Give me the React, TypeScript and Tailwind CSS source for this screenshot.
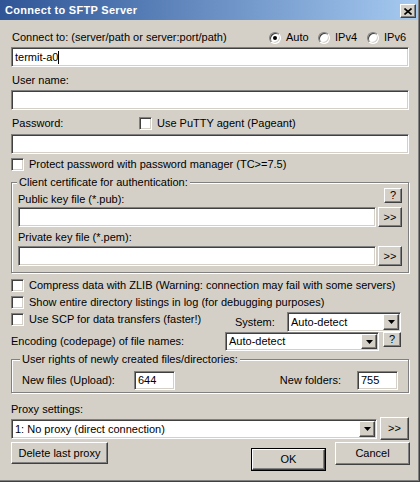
import React from "react";

const sunken =
  "border border-t-[#808080] border-l-[#808080] border-b-white border-r-white bg-white shadow-[inset_1px_1px_0_#404040,inset_-1px_-1px_0_#d4d0c8]";
const raised =
  "border border-t-white border-l-white border-b-[#404040] border-r-[#404040] bg-[#d4d0c8] shadow-[inset_-1px_-1px_0_#808080]";
const etched = "relative border border-[#808080] shadow-[inset_1px_1px_0_#fff,1px_1px_0_#fff]";

const Checkbox = ({ label, className = "" }: { label: string; className?: string }) => (
  <div className={`flex items-center h-[13px] ${className}`}>
    <span className={`w-[13px] h-[13px] shrink-0 ${sunken}`} />
    <span className="ml-[5px] whitespace-nowrap">{label}</span>
  </div>
);

const Radio = ({ label, checked }: { label: string; checked?: boolean }) => (
  <div className="flex items-center w-[49px] h-[13px]">
    <span className="relative w-[12px] h-[12px] shrink-0 rounded-full bg-white border border-t-[#808080] border-l-[#808080] border-b-white border-r-white shadow-[inset_1px_1px_0_#404040,inset_-1px_-1px_0_#d4d0c8] flex items-center justify-center">
      {checked && <span className="w-[4px] h-[4px] rounded-full bg-black" />}
    </span>
    <span className="ml-[5px]">{label}</span>
  </div>
);

const Button = ({ children, className = "" }: { children: React.ReactNode; className?: string }) => (
  <div className={`flex items-center justify-center ${raised} ${className}`}>{children}</div>
);

const Arrow = () => (
  <svg width="7" height="4" viewBox="0 0 7 4">
    <path d="M0 0h7L3.5 4z" fill="#000" />
  </svg>
);

const Combo = ({ value, className = "" }: { value: string; className?: string }) => (
  <div className={`flex items-stretch p-[1px] ${sunken} ${className}`}>
    <span className="flex-1 flex items-center pl-[2px] whitespace-nowrap">{value}</span>
    <Button className="w-[16px]">
      <Arrow />
    </Button>
  </div>
);

const Edit = ({ value, className = "", caret }: { value?: string; className?: string; caret?: boolean }) => (
  <div className={`flex items-center pl-[3px] ${sunken} ${className}`}>
    {value && <span>{value}</span>}
    {caret && <span className="w-px h-[13px] bg-black" />}
  </div>
);

export default function App() {
  return (
    <div
      className="w-[420px] h-[482px] bg-[#d4d0c8] text-black text-[11px] leading-[13px] border-r border-b border-r-[#404040] border-b-[#404040]"
      style={{ fontFamily: '"Liberation Sans", Arial, sans-serif' }}
    >
      <div className="h-full border-r border-b border-r-[#808080] border-b-[#808080] flex flex-col">
        {/* title bar */}
        <div className="h-[20px] flex bg-gradient-to-r from-[#2f5596] to-[#a6caf0] pl-[5px] pr-[2px]">
          <span className="self-center text-white font-bold tracking-[0.3px]">Connect to SFTP Server</span>
          <Button className="ml-auto mt-[4px] self-start w-[16px] h-[14px]">
            <svg width="8" height="7" viewBox="0 0 8 7">
              <path d="M0.5 0.5l7 6M7.5 0.5l-7 6" stroke="#000" strokeWidth="1.6" />
            </svg>
          </Button>
        </div>

        <div className="flex flex-col pl-[11px] pr-[9px] pt-[11px]">
          <div className="flex items-center h-[13px]">
            <span className="ml-[1px]">Connect to: (server/path or server:port/path)</span>
            <div className="ml-auto flex mr-[-7px]">
              <Radio label="Auto" checked />
              <Radio label="IPv4" />
              <Radio label="IPv6" />
            </div>
          </div>
          <Edit value="termit-a0" caret className="mt-[3px] h-[20px]" />

          <span className="mt-[7px] h-[13px] ml-[1px]">User name:</span>
          <Edit className="mt-[3px] h-[20px]" />

          <div className="mt-[7px] flex items-center h-[13px]">
            <span className="ml-[1px] w-[127px]">Password:</span>
            <Checkbox label="Use PuTTY agent (Pageant)" />
          </div>
          <Edit className="mt-[4px] h-[20px]" />

          <Checkbox label="Protect password with password manager (TC>=7.5)" className="mt-[4px]" />

          {/* client certificate group */}
          <div className={`mt-[11px] ${etched} pl-[6px] pr-[6px] pt-[5px] pb-[6px] flex flex-col`}>
            <span className="absolute -top-[7px] left-[5px] px-[2px] bg-[#d4d0c8]">
              Client certificate for authentication:
            </span>
            <div className="flex justify-between h-[18px]">
              <span className="self-end">Public key file (*.pub):</span>
              <Button className="self-start w-[18px] h-[15px]">?</Button>
            </div>
            <div className="mt-[1px] flex h-[20px] gap-[2px]">
              <Edit className="flex-1" />
              <Button className="w-[24px]">&gt;&gt;</Button>
            </div>
            <span className="mt-[4px] h-[13px]">Private key file (*.pem):</span>
            <div className="mt-[2px] flex h-[20px] gap-[2px]">
              <Edit className="flex-1" />
              <Button className="w-[24px]">&gt;&gt;</Button>
            </div>
          </div>

          <Checkbox label="Compress data with ZLIB (Warning: connection may fail with some servers)" className="mt-[6px]" />
          <Checkbox label="Show entire directory listings in log (for debugging purposes)" className="mt-[4px]" />
          <div className="mt-[3px] flex h-[20px]">
            <div className="w-[224px] mt-[1px]">
              <Checkbox label="Use SCP for data transfers (faster!)" />
            </div>
            <span className="w-[52px] self-center">System:</span>
            <Combo value="Auto-detect" className="w-[114px]" />
          </div>
          <div className="flex h-[19px]">
            <span className="flex-1 self-center">Encoding (codepage) of file names:</span>
            <Combo value="Auto-detect" className="w-[154px]" />
            <Button className="ml-[4px] mr-[8px] w-[18px] h-[15px]">?</Button>
          </div>

          {/* user rights group */}
          <div className={`mt-[8px] ${etched} pl-[10px] pr-[10px] pt-[11px] pb-[2px] flex items-center`}>
            <span className="absolute -top-[7px] left-[8px] px-[2px] bg-[#d4d0c8]">
              User rights of newly created files/directories:
            </span>
            <span className="w-[112px]">New files (Upload):</span>
            <Edit value="644" className="w-[41px] h-[19px]" />
            <span className="ml-auto mr-[16px]">New folders:</span>
            <Edit value="755" className="w-[41px] h-[19px]" />
          </div>

          <span className="mt-[10px] h-[13px]">Proxy settings:</span>
          <div className="mt-[1px] flex items-start gap-[3px]">
            <Combo value="1: No proxy (direct connection)" className="mt-[2px] flex-1 h-[20px]" />
            <Button className="w-[29px] h-[23px]">&gt;&gt;</Button>
          </div>

          <div className="mt-[2px] flex items-start">
            <Button className="w-[97px] h-[22px]">Delete last proxy</Button>
            <div className="ml-auto mt-[6px] w-[75px] h-[23px] border border-black flex">
              <Button className="flex-1">OK</Button>
            </div>
            <Button className="ml-[9px] mr-[-1px] w-[75px] h-[23px]">Cancel</Button>
          </div>
        </div>
      </div>
    </div>
  );
}
